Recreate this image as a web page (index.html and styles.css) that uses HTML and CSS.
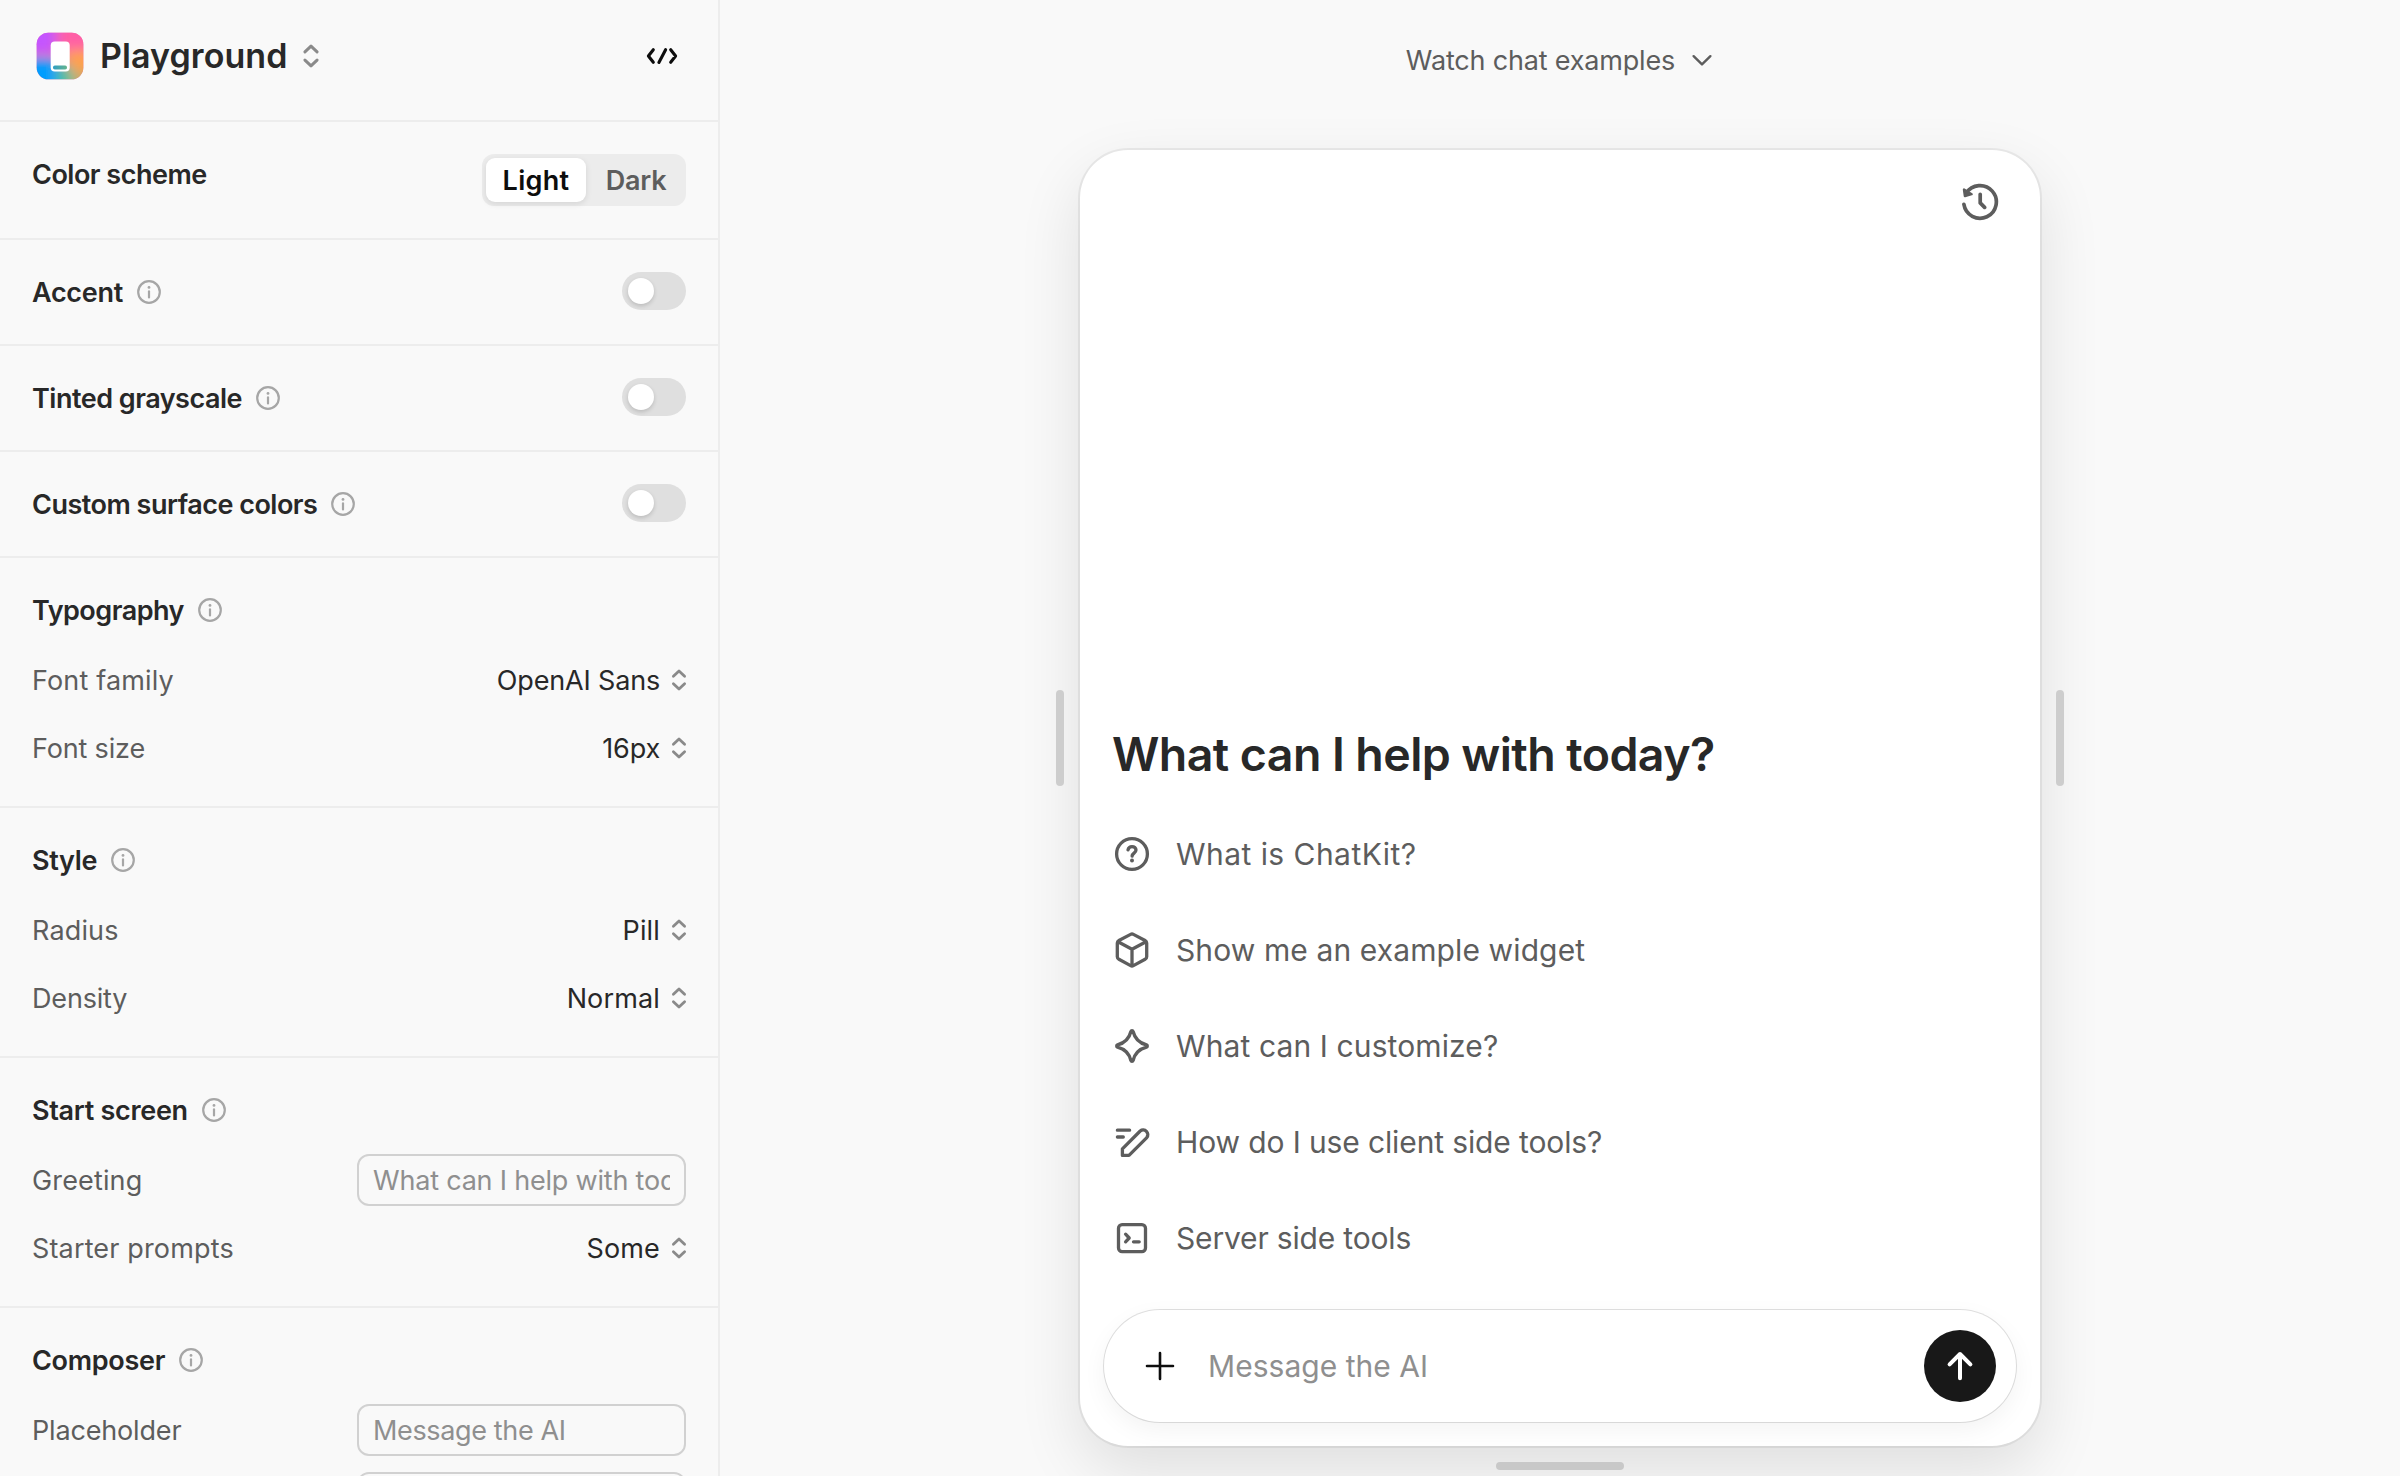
FILE: index.html
```html
<!DOCTYPE html>
<html lang="en">
<head>
<meta charset="utf-8">
<title>Playground</title>
<link rel="stylesheet" href="styles.css">
</head>
<body>
<svg class="defs" aria-hidden="true">
  <symbol id="info" viewBox="0 0 24 24"><circle cx="12" cy="12" r="10.8" fill="none" stroke="currentColor" stroke-width="2.2"/><circle cx="12" cy="7.4" r="1.4" fill="currentColor"/><path d="M12 11.4v6" stroke="currentColor" stroke-width="2.2" stroke-linecap="round"/></symbol>
  <symbol id="updown" viewBox="0 0 16 24"><path d="M2.4 8.2 8 2.9l5.6 5.3M2.4 15.8 8 21.1l5.6-5.3" fill="none" stroke="currentColor" stroke-width="2.8" stroke-linecap="round" stroke-linejoin="round"/></symbol>
</svg>
<div class="app">
  <aside class="sidebar">
    <header class="brand">
      <svg class="logo" viewBox="0 0 48 48">
        <defs>
          <clipPath id="tile"><rect x=".7" y=".7" width="46.6" height="46.6" rx="11.5"/></clipPath>
          <filter id="soft" x="-50%" y="-50%" width="200%" height="200%"><feGaussianBlur stdDeviation="6"/></filter>
          <linearGradient id="bar"><stop offset="0" stop-color="#2f9fc4"/><stop offset="1" stop-color="#66b48c"/></linearGradient>
        </defs>
        <g clip-path="url(#tile)">
          <rect width="48" height="48" fill="#e67ab0"/>
          <g filter="url(#soft)">
            <rect x="-16" y="-16" width="36" height="38" fill="#c455ff"/>
            <rect x="22" y="-16" width="44" height="36" fill="#ff5fa6"/>
            <rect x="30" y="18" width="34" height="22" fill="#ffa04e"/>
            <rect x="-16" y="27" width="36" height="38" fill="#009dff"/>
            <rect x="20" y="34" width="16" height="30" fill="#4cc0a0"/>
            <rect x="36" y="40" width="28" height="24" fill="#c8ac6c"/>
          </g>
        </g>
        <rect x="14.7" y="9.5" width="19" height="30" rx="4" fill="#fff"/>
        <rect x="17" y="33.6" width="14" height="4" rx="1.8" fill="url(#bar)"/>
      </svg>
      <h1 class="brand-name">Playground</h1>
      <svg class="updown updown-lg"><use href="#updown"/></svg>
      <svg class="code" viewBox="0 0 32 20"><path d="M7.3 3.7 2.4 10l4.9 6.3M19.6 3.7l-6.7 12.8M24.7 3.7 29.6 10l-4.9 6.3" fill="none" stroke="currentColor" stroke-width="3.1" stroke-linecap="round" stroke-linejoin="round"/></svg>
    </header>

    <section class="section inline">
      <h2 class="title fit">Color scheme</h2>
      <div class="segmented"><span class="seg active">Light</span><span class="seg">Dark</span></div>
    </section>
    <section class="section single"><h2 class="title">Accent</h2><svg class="info"><use href="#info"/></svg><span class="switch"></span></section>
    <section class="section single"><h2 class="title fit">Tinted grayscale</h2><svg class="info"><use href="#info"/></svg><span class="switch"></span></section>
    <section class="section single"><h2 class="title fit">Custom surface colors</h2><svg class="info"><use href="#info"/></svg><span class="switch"></span></section>

    <section class="section group">
      <div class="head"><h2 class="title fit">Typography</h2><svg class="info"><use href="#info"/></svg></div>
      <div class="row"><span class="label">Font family</span><span class="value tight">OpenAI Sans</span><svg class="updown"><use href="#updown"/></svg></div>
      <div class="row"><span class="label tight">Font size</span><span class="value tight">16px</span><svg class="updown"><use href="#updown"/></svg></div>
    </section>
    <section class="section group">
      <div class="head"><h2 class="title">Style</h2><svg class="info"><use href="#info"/></svg></div>
      <div class="row"><span class="label">Radius</span><span class="value">Pill</span><svg class="updown"><use href="#updown"/></svg></div>
      <div class="row"><span class="label tight">Density</span><span class="value">Normal</span><svg class="updown"><use href="#updown"/></svg></div>
    </section>
    <section class="section group">
      <div class="head"><h2 class="title">Start screen</h2><svg class="info"><use href="#info"/></svg></div>
      <div class="row"><span class="label">Greeting</span><div class="field"><span class="field-text wide">What can I help with today?</span></div></div>
      <div class="row"><span class="label">Starter prompts</span><span class="value">Some</span><svg class="updown"><use href="#updown"/></svg></div>
    </section>
    <section class="section group">
      <div class="head"><h2 class="title">Composer</h2><svg class="info"><use href="#info"/></svg></div>
      <div class="row"><span class="label tight">Placeholder</span><div class="field"><span class="field-text">Message the AI</span></div></div>
      <div class="row"><div class="field"></div></div>
    </section>
  </aside>

  <main class="preview">
    <div class="toolbar">
      <span>Watch chat examples</span>
      <svg class="chevron" viewBox="0 0 24 16"><path d="M3.6 4.2 12 12.4l8.4-8.2" fill="none" stroke="currentColor" stroke-width="2.4" stroke-linecap="round" stroke-linejoin="round"/></svg>
    </div>
    <div class="stage">
      <span class="grip"></span>
      <div class="card">
        <div class="card-top">
          <svg class="history" viewBox="0 0 40 40"><path d="M3.9 22.3A16.3 16.3 0 1 0 6.2 11.3M20.2 12.3v8.6l4.4 4.5" fill="none" stroke="currentColor" stroke-width="3.7" stroke-linecap="round" stroke-linejoin="round"/><path d="M4 7.6l.9 6.4 6.7-1.8z" fill="currentColor" stroke="currentColor" stroke-width="2.4" stroke-linejoin="round"/></svg>
        </div>
        <h2 class="greeting">What can I help with today?</h2>
        <ul class="prompts">
          <li><svg viewBox="0 0 36 36"><circle cx="18" cy="18" r="15.4"/><path d="M14 13.9c.5-2.3 2-3.3 4-3.3 2.3 0 4 1.4 4 3.5 0 3.1-3.8 3-3.9 6"/><circle class="dot" cx="18" cy="24.6" r="2"/></svg><span class="p1">What is ChatKit?</span></li>
          <li><svg viewBox="0 0 36 36"><path d="M16.6 2.4a3 3 0 0 1 2.8 0l11.7 6.1a3 3 0 0 1 1.6 2.6v13.6a3 3 0 0 1-1.6 2.6l-11.7 6.3a3 3 0 0 1-2.8 0L4.9 27.3a3 3 0 0 1-1.6-2.6V11.1a3 3 0 0 1 1.6-2.6zM4 9.8l14 7.4 14-7.4M18 17.2V34"/></svg><span class="p2">Show me an example widget</span></li>
          <li><svg viewBox="0 0 36 36"><path d="M16.9 3.5c.4-1.2 1.8-1.2 2.2 0 1.8 7.5 5.6 11.4 13.4 13.4 1.1.4 1.1 1.8 0 2.2-7.8 2-11.6 5.9-13.4 13.4-.4 1.2-1.8 1.2-2.2 0C15.1 25 11.3 21.1 3.5 19.1c-1.1-.4-1.1-1.8 0-2.2C11.3 14.9 15.1 11 16.9 3.5z"/></svg><span class="p2">What can I customize?</span></li>
          <li><svg viewBox="0 0 36 36"><path d="M3.4 6.2h12.2M3.4 13h5.9M8.4 31.4v-6.6L26.2 7a4.7 4.7 0 0 1 6.6 6.6L15 31.4z"/></svg><span class="p4">How do I use client side tools?</span></li>
          <li><svg viewBox="0 0 36 36"><rect x="4.5" y="4.6" width="27" height="27" rx="3.6"/><path d="M11.6 14.2l3.6 3.8-3.6 3.8M19.5 21.8h5.7"/></svg><span class="p5">Server side tools</span></li>
        </ul>
        <div class="composer">
          <svg class="plus" viewBox="0 0 32 32"><path d="M16 3v26M3 16h26" stroke="currentColor" stroke-width="2.6" stroke-linecap="round"/></svg>
          <span class="placeholder">Message the AI</span>
          <span class="send"><svg viewBox="0 0 32 32"><path d="M16 28.2V4M5.6 14.4 16 4l10.4 10.4" fill="none" stroke="#fff" stroke-width="4" stroke-linecap="round" stroke-linejoin="round"/></svg></span>
        </div>
      </div>
      <span class="grip"></span>
    </div>
    <span class="grip-bottom"></span>
  </main>
</div>
</body>
</html>
```
FILE: styles.css
```css
* { box-sizing: border-box; }

body {
  margin: 0;
  background: #f9f9f9;
  color: #282828;
  font-family: Inter, "Liberation Sans", sans-serif;
  font-size: 27px;
  letter-spacing: .15px;
  white-space: nowrap;
}

h1, h2, ul { margin: 0; padding: 0; }
svg { display: block; flex: none; }
.defs { display: none; }

.app { display: flex; width: 2400px; height: 1476px; overflow: hidden; }

/* Sidebar */
.sidebar { width: 720px; height: 1476px; flex: none; overflow: hidden; border-right: 2px solid #ededed; }

.brand {
  display: flex;
  align-items: center;
  height: 122px;
  padding: 0 40px 8px 36px;
  border-bottom: 2px solid #ededed;
}
.logo { width: 48px; height: 48px; }
.brand-name { margin-left: 16px; font-size: 34px; font-weight: 600; line-height: 44px; letter-spacing: .08px; }
.code { width: 32px; height: 20px; margin-left: auto; color: #0d0d0d; }

.section { border-bottom: 2px solid #ededed; padding: 32px; }
.inline { display: flex; justify-content: space-between; align-items: flex-start; height: 118px; }
.single { display: flex; align-items: center; height: 106px; }
.group { display: flex; flex-direction: column; gap: 16px; }
.head { display: flex; align-items: center; height: 40px; margin-bottom: 8px; }

.title { padding-top: 2px; font-size: 27px; font-weight: 600; line-height: 40px; letter-spacing: -.3px; }
.inline .title { padding-top: 1px; }
.fit { letter-spacing: -.5px; }
.info { width: 24px; height: 24px; margin-left: 14px; color: #a6a6a6; }

.segmented { display: flex; width: 204px; height: 52px; padding: 4px; border-radius: 12px; background: #ececec; font-weight: 600; color: #5d5d5d; letter-spacing: -.2px; }
.seg { flex: 1; padding-left: 4px; line-height: 45px; text-align: center; }
.seg.active { flex: none; width: 100px; padding: 0; border-radius: 9px; background: #fff; color: #0d0d0d; letter-spacing: .3px; box-shadow: 0 2px 6px rgba(0, 0, 0, .1); }

.switch { width: 64px; height: 38px; margin: -2px 0 0 auto; padding: 6px; border-radius: 19px; background: #dfdfdf; }
.switch::before { content: ""; display: block; width: 26px; height: 26px; border-radius: 50%; background: #fff; box-shadow: 0 2px 4px rgba(0, 0, 0, .16); }

.row { display: flex; align-items: center; height: 52px; }
.label { color: #5d5d5d; }
.value { margin-left: auto; }
.tight { letter-spacing: -.17px; }
.updown { width: 16px; height: 24px; margin: 0 -1px 0 11px; color: #8a8a8a; }
.updown-lg { width: 18px; height: 26px; margin-left: 14px; }

.field { width: 329px; height: 52px; margin-left: auto; padding: 0 14px; border: 2px solid #d1d1d1; border-radius: 12px; color: #8f8f8f; letter-spacing: -.36px; }
.field-text { display: block; overflow: hidden; line-height: 50px; height: 48px; }
.wide { letter-spacing: -.2px; }

/* Preview */
.preview { flex: 1; display: flex; flex-direction: column; align-items: center; }
.toolbar { display: flex; align-items: center; gap: 15px; height: 150px; padding-bottom: 30px; color: #5d5d5d; letter-spacing: -.18px; }
.chevron { width: 24px; height: 16px; }

.stage { display: flex; align-items: center; gap: 16px; }
.grip { position: relative; top: -60px; width: 8px; height: 96px; border-radius: 4px; background: #cdcdcd; }
.grip-bottom { position: relative; width: 128px; height: 8px; margin-top: 16px; border-radius: 4px; background: #c8c8c8; }

.card {
  display: flex;
  flex-direction: column;
  width: 960px;
  height: 1296px;
  padding: 32px 24px 24px;
  border-radius: 48px;
  background: #fff;
  box-shadow: 0 0 0 2px rgba(0, 0, 0, .06), 0 24px 64px rgba(0, 0, 0, .11);
}
.card-top { display: flex; justify-content: flex-end; padding-right: 16px; color: #5d5d5d; }
.history { width: 40px; height: 40px; }
.greeting { margin: auto 0 24px 8px; font-size: 46.5px; font-weight: 600; line-height: 56px; letter-spacing: -.58px; }

.prompts { list-style: none; color: #5d5d5d; font-size: 30px; }
.prompts li { display: flex; align-items: center; gap: 26px; height: 96px; padding-left: 10px; }
.prompts svg { width: 36px; height: 36px; fill: none; stroke: currentColor; stroke-width: 3.3; stroke-linecap: round; stroke-linejoin: round; }
.prompts .dot { fill: currentColor; stroke: none; }
.p1 { letter-spacing: .45px; }
.p2 { letter-spacing: .11px; }
.p4 { letter-spacing: -.12px; }
.p5 { letter-spacing: -.17px; }

.composer {
  display: flex;
  align-items: center;
  height: 112px;
  margin-top: 24px;
  padding: 0 20px 0 40px;
  border-radius: 56px;
  background: #fff;
  box-shadow: 0 0 0 1px rgba(0, 0, 0, .12), 0 8px 24px rgba(0, 0, 0, .05);
}
.plus { width: 32px; height: 32px; color: #0d0d0d; }
.placeholder { margin-left: 32px; color: #8f8f8f; font-size: 30px; letter-spacing: .03px; }
.send { display: flex; align-items: center; justify-content: center; width: 72px; height: 72px; margin-left: auto; border-radius: 50%; background: #181818; }
.send svg { width: 32px; height: 32px; }
```
